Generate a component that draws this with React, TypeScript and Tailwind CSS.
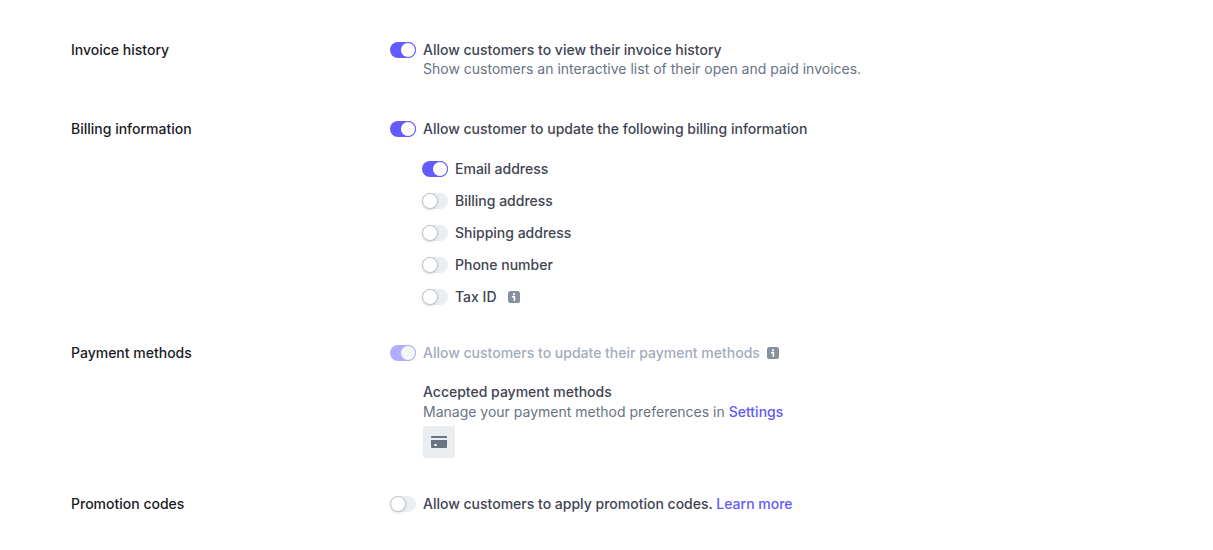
import { useState, type ReactNode } from "react";

function Toggle({ id, initial = false, disabled = false }: { id: string; initial?: boolean; disabled?: boolean }) {
  const [on, setOn] = useState(initial);
  return (
    <input
      id={id}
      type="checkbox"
      role="switch"
      checked={on}
      disabled={disabled}
      onChange={(e) => setOn(e.target.checked)}
      className="flex h-4 w-[26px] shrink-0 cursor-pointer appearance-none items-center rounded-full bg-[#ebeef1] before:block before:size-4 before:rounded-full before:border before:border-[#c0c5cc] before:bg-white before:shadow-sm before:content-[''] checked:justify-end checked:bg-[#635bff] checked:before:border-[#635bff] checked:before:shadow-none disabled:cursor-default disabled:bg-[#b1adff] disabled:before:border-[#b1adff] disabled:before:bg-[#f5f6f8]"
    />
  );
}

function InfoIcon({ label }: { label: string }) {
  return (
    <button type="button" aria-label={label} className="block size-3 cursor-pointer">
      <svg viewBox="0 0 12 12" className="block size-3">
        <rect width="12" height="12" rx="2.6" fill="#87909f" />
        <circle cx="6" cy="3.1" r="1.1" fill="#fff" />
        <path d="M4.700 5.700h1.700v3.400" fill="none" stroke="#fff" strokeWidth="1.7" strokeLinecap="round" strokeLinejoin="round" />
      </svg>
    </button>
  );
}

function Section({ title, children }: { title: string; children: ReactNode }) {
  return (
    <section className="grid grid-cols-[319px_1fr]">
      <h2 className="font-medium text-[#1a1b25]">{title}</h2>
      <div>{children}</div>
    </section>
  );
}

const billingFields = [
  { id: "email", label: "Email address", on: true },
  { id: "billing", label: "Billing address", on: false },
  { id: "shipping", label: "Shipping address", on: false },
  { id: "phone", label: "Phone number", on: false },
  { id: "tax", label: "Tax ID", on: false, info: true },
];

export default function App() {
  return (
    <main className="flex flex-col gap-9 bg-white px-[71px] py-10 font-['Inter',sans-serif] text-sm leading-5 text-[#414552]">
      <Section title="Invoice history">
        <div className="flex items-center gap-[7px]">
          <Toggle id="history" initial />
          <label htmlFor="history" className="font-medium">
            Allow customers to view their invoice history
          </label>
        </div>
        <p className="pb-[5px] pl-[33px] leading-[18px] text-[#687385]">
          Show customers an interactive list of their open and paid invoices.
        </p>
      </Section>

      <Section title="Billing information">
        <div className="flex items-center gap-[7px]">
          <Toggle id="billing-info" initial />
          <label htmlFor="billing-info" className="font-medium">
            Allow customer to update the following billing information
          </label>
        </div>
        <ul className="flex flex-col gap-3 pt-5 pl-8">
          {billingFields.map((f) => (
            <li key={f.id} className="flex items-center gap-[7px]">
              <Toggle id={f.id} initial={f.on} />
              <label htmlFor={f.id} className="font-medium">
                {f.label}
              </label>
              {f.info && (
                <span className="pl-1">
                  <InfoIcon label="About tax IDs" />
                </span>
              )}
            </li>
          ))}
        </ul>
      </Section>

      <Section title="Payment methods">
        <div className="flex items-center gap-[7px]">
          <Toggle id="payment" initial disabled />
          <label htmlFor="payment" className="font-medium text-[#a3acba]">
            Allow customers to update their payment methods
          </label>
          <InfoIcon label="About payment methods" />
        </div>
        <div className="pt-[19px] pl-[33px]">
          <h3 className="font-medium">Accepted payment methods</h3>
          <p className="text-[#687385]">
            Manage your payment method preferences in{" "}
            <a href="#settings" className="font-medium text-[#625afa]">
              Settings
            </a>
          </p>
          <div className="mt-1 flex size-8 items-center justify-center rounded-xs bg-[#ebeef1]">
            <svg viewBox="0 0 16 16" className="size-4" role="img" aria-label="Card">
              <path d="M0 4V3a1 1 0 0 1 1-1h14a1 1 0 0 1 1 1v1z" fill="#687385" />
              <path d="M0 6h16v7a1 1 0 0 1-1 1H1a1 1 0 0 1-1-1z" fill="#687385" />
              <rect x="3.300" y="10" width="2.400" height="2" rx="0.500" fill="#fff" />
            </svg>
          </div>
        </div>
      </Section>

      <Section title="Promotion codes">
        <div className="flex items-center gap-[7px]">
          <Toggle id="promo" />
          <div className="font-medium">
            <label htmlFor="promo">Allow customers to apply promotion codes.</label>{" "}
            <a href="#learn-more" className="text-[#625afa]">
              Learn more
            </a>
          </div>
        </div>
      </Section>
    </main>
  );
}
